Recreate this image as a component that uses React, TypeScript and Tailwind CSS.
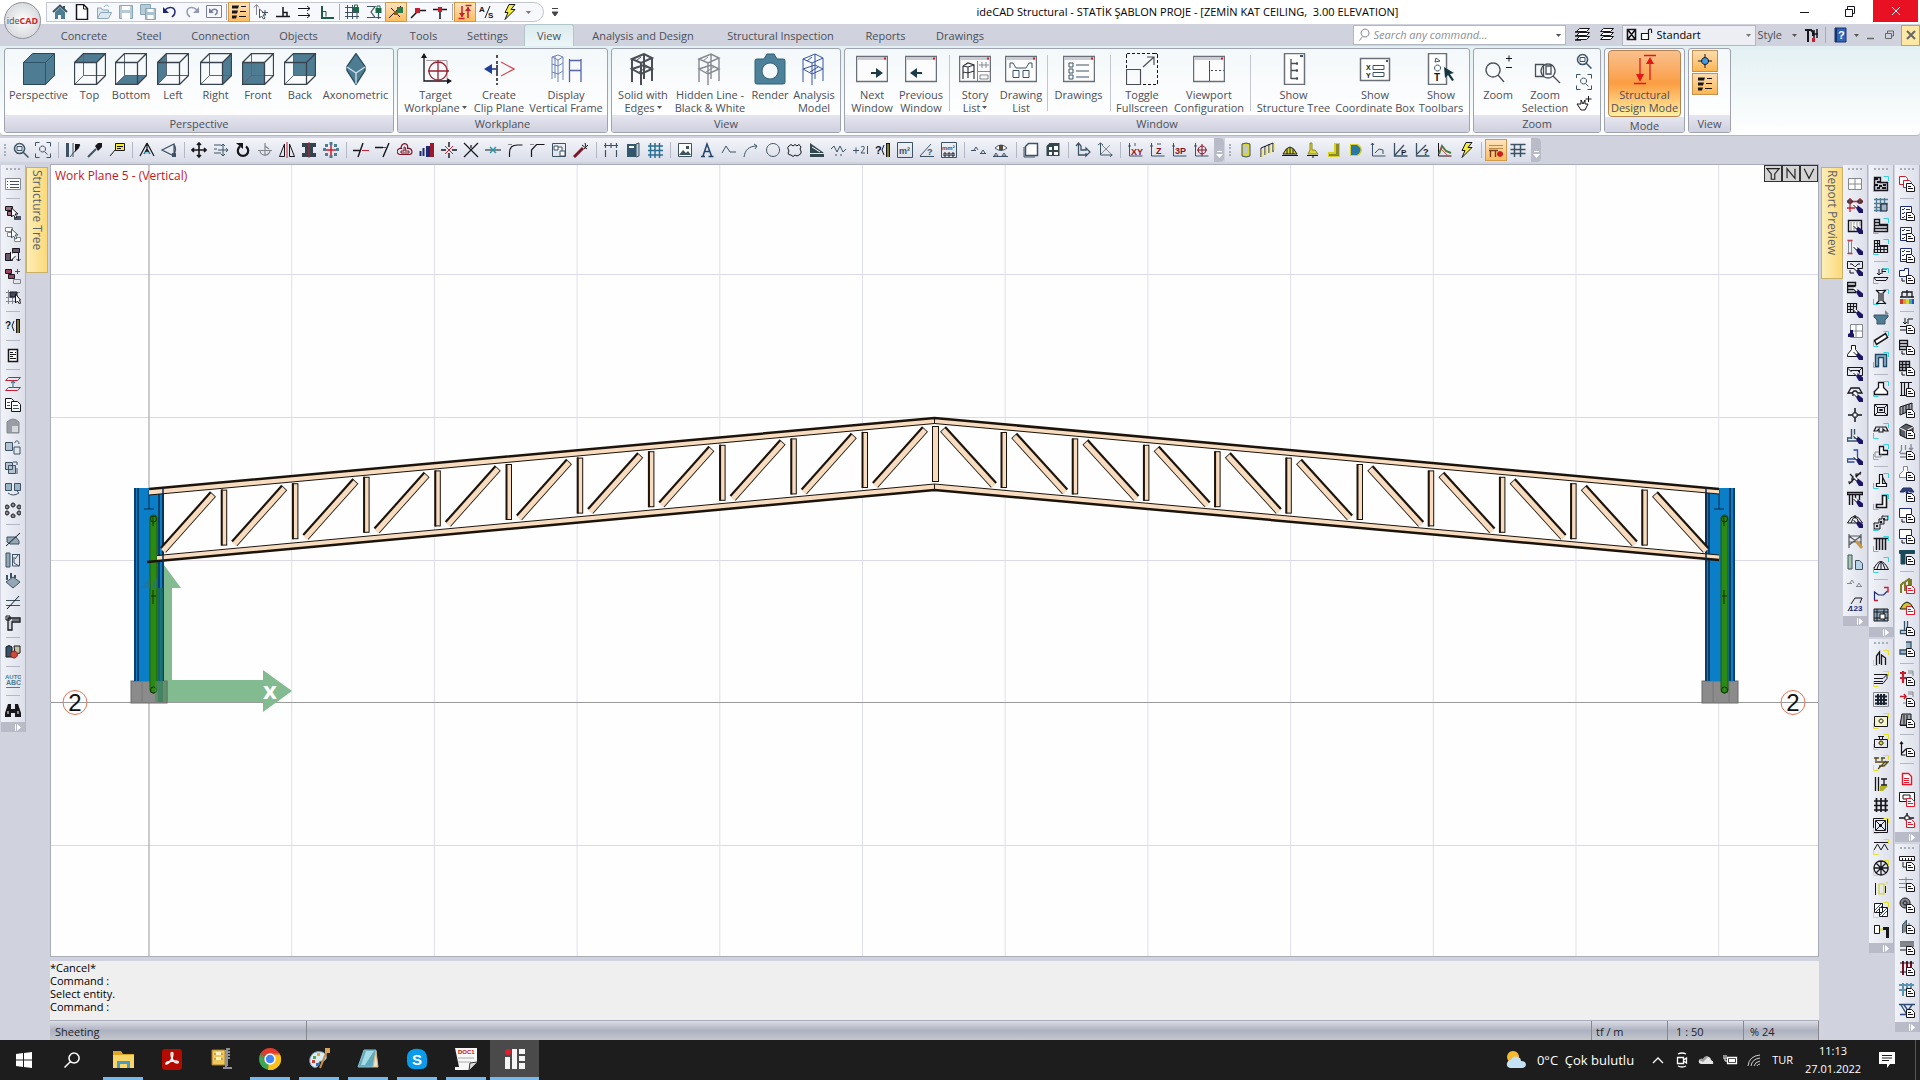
import { ReactNode } from "react";
import { clsx } from "clsx";

const K = "#16161c";
const N = "#1c2a78";
const S = "#3d5364";
const R = "#c81e2e";
const G = "#85888f";
const T = "#4d7c93";
const C = "#35d3de";
const Y = "#e4e02a";
const W = "#ffffff";

// [path, stroke, fill, stroke width] or a small piece of text
type Stroke = [string, string?, string?, number?];
type Word = { t: string; x: number; y: number; s: number; c: string };
type Art = (Stroke | Word)[];
type Tool = [string, Art, boolean?];
type Bar = (Tool | null)[];

function Glyph({ art, size = 16, className }: { art: Art; size?: number; className?: string }) {
    return (
        <svg viewBox={`0 0 ${size} ${size}`} width={size} height={size} fill="none" className={clsx("shrink-0", className)} aria-hidden="true">
            {art.map((p, i) =>
                Array.isArray(p) ? (
                    <path key={i} d={p[0]} stroke={p[1] || "none"} fill={p[2] || "none"} strokeWidth={p[3] ?? 1} />
                ) : (
                    <text key={i} x={p.x} y={p.y} fontSize={p.s} fill={p.c} fontWeight="700" fontFamily="Liberation Sans, sans-serif">
                        {p.t}
                    </text>
                )
            )}
        </svg>
    );
}

const doc: Art = [["M7.5 7.5h5l3 3v5h-8z", K, W], ["M9 10.5h3M9 12.5h5", K]];
const docRed: Art = [["M7.5 7.5h5l3 3v5h-8z", "#e0182a", W], ["M9 10.5h3M9 12.5h5", "#e0182a"]];
const brush: Art = [["M8 8.5l3 0 5 4v3.5h-4l-2-3z", "", "#1c1464"], ["M7 7l3 3", W, "", 2], ["M6.5 8l3 3", K]];
const cy: Art = [["M.5 10v5.5h5M10.5 .5h5v4.5", C]];
const ye: Art = [["M.5 10v5.5h5M10.5 .5h5v4.5", Y]];

const lens: Art = [["M6.5 1.5a5 5 0 1 0 .1 0M10.5 10.5l5 5", S, "", 1.5]];
const lensBox: Art = [...lens, ["M4 4.5h5v4h-5z", S]];
const lensFit: Art = [["M.5 4v-3.5h4M11.5.5h4v4M15.5 11.5v4h-4M4.5 15.5h-4v-4", S], ["M7.5 4a3 3 0 1 0 .1 0M9.5 9.5l3 3", S]];
const bolt: Art = [["M8 .5h6l-4 5h4l-10 10 3-7h-3z", K, "#f4ee3a"]];
const layers: Art = [["M5.5 1.5h10l-3 3h-10zM5.5 5.5h10l-3 3h-10zM5.5 9.5h10l-3 3h-10z", K, W]];
const legend: Art = [["M1 1.5h7l-1 3h-6zM1 6.5h6l-1 3h-5zM1 11.5h5l-1 3h-4z", "", K], ["M10 2.5h5M9 7.5h6M8 12.5h7", K]];
const designArrows: Art = [["M5 2v11M11 3v11M1.5 14.5h6M8.5 1.5h6", R, "", 1.5], ["M2 9h6l-3 4zM8 7h6l-3-4z", "", R]];
const table: Art = [["M.5 2.5h15M.5 7.5h15M.5 11.5h15M4.5 2v13M10.5 2v13", S, "", 1.5]];
const ground: Art = [["M0 8.5h5M3 8l2-3 2 3M9 11.5h6M10 11l2-3 2 3", S]];

const quickTools: Bar = [
    ["Home", [["M1 8l7-6.5 7 6.5", S, "", 2], ["M3 8l5-5 5 5v7h-4v-4h-3v4h-3z", "", T], ["M12 2v4", S, "", 2]]],
    ["New", [["M2.5 .5h7l4 4v11h-11z", K, W, 1.5], ["M9.5 1v4h4", K]]],
    ["Open", [["M1.5 14v-10h4l1 2h6v2M1.5 14.5l3-6h11l-3 6z", "#8ba7b9", "#dde8ee"], ["M8 3c2-3 4-2 5 0", "#8ba7b9"]]],
    ["Save", [["M1.5 1.5h13v13h-13z", "#86a5b6", "#b6cbd6"], ["M4 2h8v4h-8zM4 9h8v6h-8z", "", W]]],
    ["Save all", [["M.5 .5h10v10h-10z", "#86a5b6", "#b6cbd6"], ["M5.5 4.5h10v11h-10z", "#86a5b6", "#a9c2cf"], ["M7.5 5h6v3h-6zM7.5 11h6v4h-6z", "", W]]],
    ["Undo", [["M3 6c4-4 10-3 10 2 0 3-2 4-3 5", "#1b2372", "", 1.5], ["M1 3v6h6z", "", "#1b2372"]]],
    ["Redo", [["M13 6c-4-4-10-3-10 2 0 3 2 4 3 5", "#9297b3", "", 1.5], ["M15 3v6h-6z", "", "#9297b3"]]],
    ["Undo view", [["M.5 1.5h15v12h-15z", "#777e9d"], ["M5 7c3-3 7-2 6 2l-2 2", "#777e9d", "", 1.5], ["M3 4v5h5z", "", "#777e9d"]]],
    null,
    ["Legend", legend, true],
    ["Pick", [["M3.5 1v10M1 3.5l2.5-3 2.5 3", G], ["M6.5 5v9l2-2 2 3 1.5-1-2-3h3z", S, W], ["M9 8.5h6M12 6v5", S]]],
    ["Perpendicular", [["M1 12.5h14M8 3v9M8 8.5h4v4", K, "", 1.5]]],
    ["Parallel", [["M1 4.5h12M1 11.5h12M10 2l3 2.5-3 2.5M10 9l3 2.5-3 2.5", K]]],
    ["Ortho", [["M3 2v12h12", "#1d5a4b", "", 2], ["M3 7.5h4v5", "#1d5a4b"]]],
    null,
    ["Grid lock", [["M1 3.5h14M1 8.5h14M1 12.5h14M3.5 1v14M8.5 1v14M13 9v6", S], ["M9 3h6v5h-6z", "", "#1d6a4b"], ["M10.5 3v-2h3v2", "#1d6a4b"]]],
    ["Object lock", [["M1 2.5h8l-4 5.5 4 5.500h-8M12.500 9v6M10 13.5h5", S, "", 1.2], ["M9.500 4h6v5h-6z", "", "#1d6a4b"], ["M11 4v-2h3v2", "#1d6a4b"]]],
    ["Snap lock", [["M1 14l12-12M3 4l9 9", K], ["M9 3h6v6h-6z", "", "#2a7d4b"], ["M6 7h4v4h-4z", "", "#8a5d16"]], true],
    ["Snap near", [["M1 14l6-6M8 6.5h8", K, "", 1.5], ["M5 4h5v5h-5z", "", R]]],
    ["Snap end", [["M1 5.5h14M8 6v9", K, "", 1.5], ["M6 3h4v5h-4z", "", R]]],
    null,
    ["Structural design", designArrows, true],
    ["Analysis style", [{ t: "A", x: 0, y: 8, s: 8, c: K }, ["M11 2l-5 12", K], { t: "S", x: 9, y: 14, s: 8, c: K }]],
    ["Run analysis", bolt],
];

const drawTools: Bar = [
    ["Zoom window", lensBox],
    ["Zoom extents", lensFit],
    null,
    ["Match", [["M1 1h3v14h-3z", "", S], ["M8 1v14M5 15l10-12", S], ["M10 2h5l-1 4-4 4z", "", K]]],
    ["Pipette", [["M1 15l8-8", S, "", 2], ["M8 4l3-3h4v4l-4 4z", "", K]]],
    ["Label", [["M6.5 1.5h9v7h-9z", K, "#f5ee31"], ["M8 4.5h6M8 6.5h4M6 8l-5 6", K]]],
    null,
    ["Dimension", [["M8 1l-7 13M8 1l7 13M8 1v9M5 12l3-5 3 5", K, "", 1.2], ["M5 11h6", C]]],
    ["Angle", [["M1 8l12-6v12zM13 2q3 6 0 10", S, "", 1.2], ["M11 11h4v4h-4z", "", S]]],
    null,
    ["Move", [["M8 1v14M1 8h14M6 3l2-2 2 2M6 13l2 2 2-2M3 6l-2 2 2 2M13 6l2 2-2 2", K, "", 1.6]]],
    ["Stretch", [["M1 3h7M1 7h3M1 11h7M10 2v12M5 8h10M8 4l2-2 2 2M8 12l2 2 2-2M13 6l2 2-2 2", S]]],
    ["Rotate", [["M5 4.5a5.2 5.2 0 1 0 6 0", K, "", 2.2], ["M1 1h7v6z", "", K]]],
    ["Rotate copy", [["M8 1v13M1 8.5h14M3 9c1 5 8 6 10 0M8 4l4 3", G, "", 1.2]]],
    ["Mirror", [["M8 0v16", R], ["M5.5 2v12.5h-5zM10.5 2v12.5h5z", K]]],
    ["Mirror section", [["M1 1h14v4h-3v6h3v4h-14v-4h3v-6h-3z", "", "#32424e"], ["M8 0v16", R]]],
    ["Array", [["M2 2h3v3h-3zM11 2h3v3h-3zM2 11h3v3h-3zM11 11h3v3h-3zM6.5 0h3v3h-3zM6.5 13h3v3h-3zM0 6h3v3h-3zM13 6h3v3h-3z", "", T], ["M8 3v10M3 8h10", R, "", 1.5]]],
    null,
    ["Trim", [["M0 8.5h8M5 15l5-14", K, "", 1.4], ["M9 8.5h7", R, "", 1]]],
    ["Extend", [["M0 5.5h8M8 15l6-14", K, "", 1.4], ["M8 5.5h4", R]]],
    ["Offset", [["M5.5 2.5c3-2 6 0 5 4 5-1 6 6 2 6h-9c-5 0-4-7 1-6-1-2 0-3 1-4z", "#7c1626", "", 1.2], ["M7 5c2 0 2 1 1 4h4v2h-8v-2h3z", "#7c1626"]]],
    ["Elevation", [["M1.5 9v5M4.5 6v8", N, "", 2], ["M7 4h4v11h-4z", "", N], ["M11 1h4v14h-4z", "", "#9c1a28"]]],
    ["Break", [["M8 0v5M8 11v5M0 8h5M11 8h5", K, "", 1.4], ["M4 4l8 8M12 4l-8 8", R]]],
    ["Intersect", [["M1 1l14 14M15 1l-14 14M8 3v3", K, "", 1.2]]],
    ["Join", [["M0 8h16", K], ["M5 5l3 3-3 3M11 5l-3 3 3 3", "#2596a8", "", 1.4]]],
    ["Fillet", [["M2.5 15v-4c0-6 3-8 8-8h5", K, "", 1.2], ["M1 2.5h4", G]]],
    ["Chamfer", [["M2.5 15v-7l5-5.5h8", K, "", 1.2], ["M1 2.5h4", G]]],
    ["Region", [["M1.5 1.5h13v13h-13z", S], ["M3 4h4v4h-4zM9 9h5v5h-5zM7 5h4v4", S, W]]],
    ["Wizard", [["M1 15l9-9", "#7c1626", "", 3], ["M9 3l5 4M12 1l1 4M15 3l-4 4", K]]],
    null,
    ["Axis", [["M1 3.5h14M2.5 1v5M8 1v5M13.5 1v5M2.5 8v7M13.5 8v7", S, "", 1.2]]],
    ["Library", [["M2 2h9v13h-9z", "", "#33576c"], ["M11 2l3-1v13l-3 1z", S, "#b8ccd6"], ["M4 4h5v2h-5z", "", W]]],
    ["Grid", [["M1 4h15M1 8.5h15M1 13h15M3.5 1v15M8 1v15M12.5 1v15", "#2a6f93", "", 1.5]]],
    null,
    ["Image", [["M1.5 1.5h13v13h-13z", S, W], ["M2 13l4-5 3 3 2-2 3 4z", "", S], ["M9 4h3v3h-3z", "", S]]],
    ["Text", [["M2 14.5h4M9.5 14.5h5M4 14l4-12 4.5 12M6 9.5h5", "#24466a", "", 1.5]]],
    ["Polyline", [["M1 11l4-7 4 6h6", S]]],
    ["Curve", [["M1 15c1-7 5-11 13-11M11 2l3 2-2 3", S]]],
    ["Circle", [["M8 1.5a6.5 6.5 0 1 0 .1 0", S]]],
    ["Cloud", [["M2 4q2-3 4 0 2-3 4 0 2-3 4 1-2 2 0 4 1 3-2 4-2 2-4 0-2 3-4 0-3 0-3-2 2-2 0-4-1-2 1-3z", K]]],
    ["Hatch", [["M1 1v10h14zM1 12h14v3h-14z", "", "#33474f"], ["M3 5l8 5", W]]],
    ["Spline", [["M0 7l3-3 3 6 3-6 3 6 3-3M4 13h2M9 13h2", S]]],
    ["Level", [["M0 8.5h6M3 5.5v6M8 5q4-2 3 2l-3 4h4M14.5 4v8", S]]],
    ["Measure", [{ t: "?", x: 0, y: 12, s: 11, c: K }, ["M9 3l-2 5 2 5", K], ["M11 1h4v14h-4z", "", K], ["M13 2v13", "#f2e838", "", 1]]],
    ["Area", [["M.5 .5h15v15h-15z", S], { t: "m²", x: 2, y: 12, s: 9, c: S }]],
    ["Measure angle", [["M1 14.5h14M1 14l11-12", S], { t: "?", x: 8, y: 13, s: 9, c: S }]],
    ["Sections", [["M.5 .5h15v15h-15z", S], { t: "mm²", x: 1, y: 8, s: 6, c: S }, ["M3 11h2v3h-2zM7 11h2v3h-2zM11 11h2v3h-2z", K]]],
    null,
    ["Supports", ground],
    ["Visibility", [["M2 6q6-6 12 0-6 5-12 0z", S, W], ["M6 3h4v5h-4z", "", "#5c4634"], ["M1 14l2-3 2 3zM9 14l2-3 2 3zM0 14.5h15", S]]],
    null,
    ["Sheet", [["M2.5 4.5l3-3h9v12h-12z", S, W, 1.5], ["M1 5v10h11", S]]],
    ["Sheets", [["M1.5 4l3-3h10v13h-13z", "", "#33474f"], ["M4 5h3v3h-3zM9 4h4v4h-4zM4 10h3v3h-3zM9 10h4v3h-4z", "", W]]],
    null,
    ["Origin", [["M3.5 1v12h8M1 4l2.5-3 2.5 3v4h5v-2l4 4-4 4v-3", S, "", 1.3]]],
    ["Axes", [["M3.5 1v12h12M1 3l2.5-2 2.5 2M13 11l2 2-2 2", S], ["M5 3l9 9M13 3l-9 9", G]]],
    null,
    ["Plane XY", [["M2.5 1v13h13M1 4h3M8 1v3", S], { t: "XY", x: 4, y: 13, s: 9, c: "#8c1022" }]],
    ["Plane Z", [["M2.5 1v13h13M1 4h3M8 2h4", S], { t: "Z", x: 7, y: 12, s: 9, c: "#8c1022" }]],
    ["Plane 3P", [["M2.5 1v13h13M1 4h3", S], { t: "3P", x: 4, y: 12, s: 9, c: "#8c1022" }]],
    ["Plane object", [["M2.5 1v13h13M1 4h3", S], ["M9 4a4 4 0 1 0 .1 0M9 2v12M4 8h10", "#8c1022"]]],
];

const loadTools: Bar = [
    ["Column", [["M4 2q4-2 8 0v12q-4 2-8 0z", S, "#d9d532"], ["M6 4h4v8h-4z", "", "#c1c7c5"]]],
    ["Beam frame", [["M1 6v9M5 4v9M9 2v9M13 1v9M1 6l12-5", K], ["M2 7v8M6 5v8M10 3v8M14 2v6", Y]]],
    ["Dome load", [["M1 12q7-14 14 0z", K, "#d9d532"], ["M5 12v-5M8 12v-6M11 12v-5M0 13.5h16", K]]],
    ["Footing load", [["M6 1h2v7h3l3 4h-10l2-4z", "#8b8a28", "#d9d532"], ["M3 13.5h11M9 14v2", K]]],
    ["Wall load", [["M8 1h6v14h-12v-5h6z", "", "#d5d028"], ["M10 2h3v12h-10v-2h7z", "", "#8b8a28"]]],
    ["Solid", [["M2 2h8q8 6 0 12h-8z", "", "#d5d028"], ["M3 3h6q7 5 0 10h-6z", "", "#2878a3"]]],
    ["Diagram", [["M2.5 1v13h13M1 3l1.5-2 1.5 2M5 11l4-4 4 1 0 4", S]]],
    ["P diagram", [["M2.5 1v13h13M3 13l9-10", S, "", 1.3], { t: "P", x: 9, y: 13, s: 8, c: K }]],
    ["Query diagram", [["M2.5 1v13h13M3 12l9-9", S, "", 1.3], { t: "?", x: 9, y: 13, s: 9, c: K }]],
    ["Spectrum", [["M2.5 1v13h13", K], ["M3 12l3-8 4 5 5 2", "#4c7a3c", "", 2], ["M4 6l9 9", "#b25058"]]],
    ["Analyse", bolt],
    null,
    ["Steel frame", [["M1 3.5h14M1 6.5h14", "#b98a4a"], ["M1 8.5h9M2.5 9v6M7.5 9v6", "#7a3a1e", "", 1.4], ["M12 9a3 3 0 1 0 .1 0", "", "#d01c1c"]], true],
    ["Table", table],
];

const leftTools: Bar = [
    ["Properties", [["M.5 2.5h15v11h-15z", G, W], ["M2 5.5h1M2 8.5h1M2 11.5h1M5 5.5h9M5 8.5h9M5 11.5h9", S]]],
    null,
    ["Select", [["M.5 1.5h7v4h-7zM2.5 6.5h6v4h-6z", K, "#9a6c80"], ["M9 11h7v4h-7z", "", "#4b5365"], ["M6.5 3v9l2-2 2 3 1.5-1-2-3h3z", K, W]]],
    ["Deselect", [["M.5 1.5h7v4h-7zM2.5 6.5h6v4h-6zM9.5 11.5h6v4h-6z", G, W], ["M6.5 3v9l2-2 2 3 1.5-1-2-3h3z", S, W]]],
    ["Select level", [["M.5 6.5h7v7h-7zM7.5 1.5h7v4h-7z", K, "#6b5670"], ["M5.5 5v9l5-5M13.5 5v9M11.5 12l2 2 2-2", K, W]]],
    ["Select group", [["M.5 1.5h6v4h-6zM3.5 6.5h6v4h-6z", K, "#9a4460"], ["M8.5 11.5h7v4h-7z", G], ["M10 3.5h5M12.5 1v5", S]]],
    ["Select grid", [["M1 3.5h14M1 8.5h8M1 12.5h9M3.5 1v14M7.5 6v9", G], ["M5 3h7v5h-7z", K, "#444b5c"], ["M10.5 5v9l2-2 2 3 1-1-1-3h1z", K, W]]],
    null,
    ["Measure", [{ t: "?", x: 0, y: 11, s: 10, c: K }, ["M9 3l-2 5 2 5", K], ["M11 1h4v14h-4z", "", K], ["M13 2v13", "#e8cf38"]]],
    null,
    ["Notes", [["M3.5 2.5h9v12h-9z", K, W, 1.5], ["M5 5.5h3M5 7.5h6M5 9.5h3M5 11.5h6M10 5.5h1", K]]],
    null,
    ["Planes", [["M3.5 1.5h12l-3 3h-12zM3.5 11.5h12l-3 3h-12z", R], ["M8 5v7M6 7l2-2 2 2", T, "", 1.2]]],
    ["Copy", [["M.5 1.5h6l2 2v8h-8z", K, W], ["M6.5 4.5h6l3 3v7h-9z", K, W], ["M2 5.5h3M2 8.5h3M8 8.5h5M8 11.5h6", S]]],
    ["Paste", [["M2 4q6-6 12 0v11h-12z", G, "#9a9da5"], ["M7 8h6v6h-6z", "", "#d6d8de"]]],
    ["Move to", [["M.5 3.5h7v8h-7z", S, "#b5c2d2"], ["M10 4c0-3 4-3 4 1M9 8h6v7h-6z", S]]],
    ["Copy to", [["M.5 2.5h7v7h-7zM3.5 5.5h7v8h-7z", S, "#b5c2d2"], ["M8 2h4v3M12 8v6", S]]],
    ["Mirror to", [["M.5 2.5h6v7h-6zM9.5 2.5h6v7h-6z", S, "#9cb4c8"], ["M3 12q5 4 11 0M12 10l2 2", S]]],
    ["Polar", [["M8 1a2 2 0 1 0 .1 0M8 12a2 2 0 1 0 .1 0M2 3a2 2 0 1 0 .1 0M2 9a2 2 0 1 0 .1 0M14 3a2 2 0 1 0 .1 0M14 9a2 2 0 1 0 .1 0", K, G]]],
    null,
    ["Cut plane", [["M2 6h9l3 4v3h-9l-3-2z", S, "#93a7b4"], ["M1 15l14-13", K]]],
    ["Cut column", [["M1 1h4v14h-4z", S, "#93a7b4"], ["M7.5 2v12h7v-12M7 2.5h8M9 5v6l5 3M13 3l-3 4", S]]],
    ["Slab edit", [["M1 9l7-5 7 5-7 6z", S, "#93a7b4"], ["M2 7v-5M6 5v-5M10 5v-3", S, "", 2]]],
    ["Cut line", [["M1 6.5h14M1 11.5h14", S], ["M2 15l12-13", K]]],
    ["Pipe", [["M3 3h12v4h-8v8h-4z", K, "#cfd4dd", 1.3], ["M1 1h4v4h-4zM7 5h8", K]]],
    null,
    ["Materials", [["M1 3q3-3 6 0v10h-6z", K, "#35536b"], ["M9 2h6v7l-5 1z", K, "#c9c2a2"], ["M9 7a3.5 3.5 0 1 0 .1 0", "#762018", "#cc4a3c"]]],
    null,
    ["Auto text", [{ t: "AUTO", x: 0, y: 6, s: 6, c: T }, { t: "ABC", x: 1, y: 12, s: 7, c: T }, ["M1 14.5h14", T]]],
    null,
    ["Find", [["M3 2h3v5h4v-5h3l3 9v4h-6v-4h-4v4h-6v-4z", "", K], ["M3 9v3M13 9v3", W]]],
];

const editTools: Bar = [
    ["Edit grid", [["M1.5 2.5h13v11h-13zM1 8h14M8 2v12", G, W]]],
    ["Edit axis", [["M3 1v14M13 1v6M0 4.5h16M0 11h8", R, "", 1.3], ["M1 3h4v3h-4zM11 3h4v3h-4z", K], ...brush]],
    ["Edit wall", [["M1.5 2.5h13v11h-13z", K, W, 1.4], ["M4 4v9M7 4v9M10 4v4M13 4v4", G], ...brush]],
    ["Edit column", [["M.5 1.5h5M.5 14.5h5", R, "", 1.5], ["M1.5 2h3v12h-3z", G], ...brush]],
    ["Edit opening", [["M.5 1.5h15v7h-15z", K], ["M3 4h2l3 3 3-3h2M3 10v3h4", K], ...brush]],
    ["Edit slab", [["M.5 1.5h8v3h-8zM.5 5.5h8M.5 8.5h8v3h-8zM.5 1v11", K, "", 1.4], ...brush]],
    ["Edit ribbed slab", [["M.5 1.5h9v9h-9zM.5 4.5h9M.5 7.5h9M3.5 1v10M6.5 1v10", K, "", 1.2], ...brush]],
    ["Edit raft", [["M3.5 1.5h12v13h-12zM3 8h12M9 1v14", G, W], ["M1 14v-3l2-1v-3h3v3l1 1v3z", "", "#1c1464"]]],
    ["Edit footing", [["M4.5 1.5h4v4l4 5v2h-12v-2l4-5z", K, W], ...brush]],
    ["Edit mat", [["M.5 2.5h15v8h-15zM3.5 5.5h9v3M.5 3l4 4M15 3l-4 4", K], ...brush]],
    ["Edit beam", [["M1 7l3-5h8l3 5h-4l-2-2h-2l-2 2zM6 7v3", K, "", 1.3], ...brush]],
    ["Edit node", [["M8 1v14M1 8h14", K, "", 1.5], ["M6 6h4v4h-4z", K, W]]],
    ["Edit stair wall", [["M4.5 1v10M7.5 1v9h3v3h-10v-3h4", "#35536b", "", 1.4], ...brush]],
    ["Edit corner", [["M6.5 1h4v9h-10v3h7", "#2b4ea0", "", 1.3], ...brush]],
    ["Edit stair", [["M1 12h4v-4h4v-4h5M2 14l12-12M3 4l6 6", K, "", 1.2], ...brush]],
    ["Edit louver", [["M.5 1.5h15v2h-15zM2.5 4v10M5.5 4v10M8.5 4v5M12.5 4v5", K, "", 1.4], ...brush]],
    ["Edit dome", [["M.5 11q7-14 15 0zM4 11q4-12 8 0M8 3v7", K], ...brush]],
    ["Edit truss", [["M2 1v14M14 1v14M2 3l12 9M2 12l12-9M2 3h12M2 9h12", "#55595f", "", 1.2], ["M9 8l6 7", "#c79a4b", "", 3]]],
    ["Edit panel", [["M1 1h4v14h-4z", S, "#a9c8a9"], ["M8.5 6.5h4l3 3v6h-7z", S, "#b9d4e8"]]],
    ["Edit support", [["M0 8.5h5M3 8l2-3 2 3M9 11.5h6M10 11l2-3 2 3", G]]],
    ["Edit numbers", [["M4 8l4-6h7l-2 5M1 15l3-5", K], { t: "123", x: 2, y: 15, s: 8, c: N }]],
];

const modelTools: Bar = [
    ["Slab", [["M1.5 1.5h6v5h7v8h-13z", K, "#c4c8ce", 1.4], ["M2 3h3M4 6h3M2 9h3M6 10h3M10 9h3M4 12h3M9 12h4", K, "", 2], ...cy]],
    ["Ribbed slab", [["M1 2.5h14M1 6.5h14M1 10.5h6M1 13.5h6M3.5 1v14M7.5 1v14M11.5 1v6", T, "", 1.4], ["M8 7h6v7h-6z", K, "#9cb4c8"]]],
    ["Hollow slab", [["M1.5 1.5h5v5h8v7h-13zM1.5 4.5h5M1.5 7.5h13M1.5 10.5h13", K, "", 1.4], ...cy]],
    ["Waffle slab", [["M1.5 1.5h5v5h8v7h-13zM1.5 4.5h5M1.5 7.5h13M1.5 10.5h13M4.5 2v11M7.5 7v6M11 7v6", K, "", 1.2], ...cy]],
    null,
    ["Point load", [["M6 1v6M4 5l2 2 2-2M9 1h5M9 1v5M9 3.5h4M1 9.5h14l-2 3h-10z", K], ...cy]],
    ["Column", [["M3 1.5h10M3 14.5h10M3 1l3 3v8l-3 3M13 1l-3 3v8l3 3M8 4v8", K, "", 1.2], ...cy]],
    ["Capital", [["M1 5h14v2l-3 3v4h-8v-4l-3-3z", S, T], ["M12 0l4 4h-4z", "", G]]],
    ["Beam", [["M1.5 9.5l11-7 2 4-11 7z", K, W, 1.5], ...cy]],
    ["Portal", [["M2.5 14.5v-12h11v12h-3v-9h-5v9z", "#1c4a66", "#9cb4c8", 1.4], ...cy]],
    null,
    ["Footing", [["M5.5 1.5h5v5l4 4v3h-13v-3l4-4z", K, W, 1.3], ...cy]],
    ["Pit", [["M1.5 2.5h13v11h-13zM4.5 5.5h7v5h-7zM6.5 7.5h3v1h-3zM2 3l3 3M14 3l-3 3M2 13l3-3M14 13l-3-3", K]]],
    ["Strip footing", [["M1 8l2-4h10l2 4h-3l-2-2v3h-4v-3l-2 2z", K, "", 1.2], ...cy]],
    ["Step footing", [["M6.5 2.5h4v4h4v4h-8z", K, W, 1.3], ["M2 13v-5h4M2 13h6v-3", G], ...cy]],
    null,
    ["Wall", [["M6.5 1.5h3v9h4v3h-10v-3h3zM9.5 4l3 6", K, W, 1.2], ...cy]],
    ["Corner wall", [["M9.5 1.5h4v12h-10v-3h6z", K, W, 1.6], ...cy]],
    ["Ramp", [["M9 1h6v4h-4v4h-4v5h-6v-6h5v-4h3z", K, "#d5d8dd"], ["M3 10h2v2h-2zM10 3h2v2h-2zM7 6h2v2h-2z", "", K], ...cy]],
    ["Piles", [["M.5 2.5h15M3.5 3v11M6.5 3v11M9.5 3v11M12.5 3v11", K, "", 1.5], ...cy]],
    ["Dome", [["M.5 12.5q7-16 15 0zM4 12q4-14 8 0M8 4v8", K], ...cy]],
    null,
    ["Path", [["M1.5 14v-8l4 3h5l4-4", N, "", 1.2], ["M1 14.5h4M11 1.5h4v5", R, "", 1.4]]],
    ["Mesh view", [["M1 2h14v12h-14z", K, "#8ea8ba"], ["M1 5h14M1 11h14M4 2v12M11 2v12", K], ["M7 7h5v5h-5z", K, W]]],
];

const steelTools: Bar = [
    ["Purlin", [["M3.5 15v-9l3-4v12M8.5 15v-10l4 3v7", K, "", 1.3], ...ye]],
    ["Plate", [["M1 3.5h13v4l-4 5h-10M1 7.5h9l4-4M1 10.5h9", K], ...ye]],
    ["Rebar grid", [["M.5 .5h15v14h-15z", G], ["M2 4.5h12M2 8h12M2 11.5h12M5 2v11M8 2v11M11 2v11", "#1a2230", "", 2]]],
    ["Bolt", [["M1.5 3.5h13v10h-13z", K, "#f5f4c8"], ["M8 6a2 2 0 1 0 .1 0", K], ...ye]],
    ["Anchor", [["M1.5 5.5h13v8h-13zM6.5 2v4M9.5 2v4M5 2.5h6", K], ["M8 7a2 2 0 1 0 .1 0", K, Y], ...ye]],
    ["Weld", [["M1 3h5M8 3h4M2 7h13l-4 4h-5M3 3v3M9 3v3M5 14l8-8", "#53470f", "", 1.3], ...ye]],
    ["Profile", [["M2.5 1v14M5.5 1v14M8 3h6M8 9h6M11 3v6", K, "", 1.3], ["M7 10h8l-5 5h-3z", "", "#b0b226"]]],
    ["Trusses", [["M1 4h14M1 8.5h14M1 13h14M3.5 1v14M8 1v14M12.5 1v14", K, "", 1.7]]],
    ["Bracing", [["M.5 .5h14v14h-14zM2.5 2.5h10v10h-10zM3 3l9 9M12 3l-9 9", K], ["M6 6h3v3h-3z", "", K], ...ye]],
    ["Wave", [["M1 11l3.5-6 3.5 6 3.5-6 3.5 6M1 3.5h14", K], ...ye]],
    ["Sphere", [["M8 1a7 7 0 1 0 .1 0M8 1v14M1 8h14M3 3l10 10M13 3l-10 10", K, "", 1.3], ...ye]],
    ["Split", [["M2.5 2v12M12.5 5v7", K], ["M6 3h5v10h-5zM13 2h2", "#d2cf2d", "", 1.2]]],
    ["Copy hatch", [["M1.5 1.5h8v9h-8zM6.5 5.5h8v9h-8z", K, W], ["M2 8l6-6M7 13l7-7M3 10l6-6M9 14l5-5", S], ...ye]],
    ["Bracket", [["M1.5 2.5h5v8h-5z", K, W], ["M7 6.5h4", Y, "", 2], ["M10 4h6v11h-3v-8h-3z", "", K]]],
];

const reportTools: Bar = [
    ["Copy report", [["M.5 .5h6l2 2v6h-8z", R, W], ["M4.5 4.5h6l2 2v5h-8z", R, W], ...doc]],
    null,
    ["Check list", [["M1.5 1.5h11v13h-11z", N, W], ["M3 4l1 1 2-2M7 4.5h4M3 8l1 1 2-2M3 12l1 1 2-2", N], ...doc]],
    ["Check list 2", [["M1.5 1.5h11v13h-11z", N, W], ["M3 4l1 1 2-2M7 4.5h4M3 8.5h4M3 12l1 1 2-2", N], ...doc]],
    ["Check list 3", [["M1.5 1.5h11v13h-11z", N, W], ["M3 4l1 1 2-2M7 4.5h4M3 8l1 1 2-2M3 12.5h4", N], ...doc]],
    ["Export report", [["M.5 2.5h5v-2h4v8h-9z", N, W], ["M3 10v3h3", K], ...doc]],
    ["Stress report", [["M8 1v6M3 3h10v5M1 8h14M3 3v5", K, "", 1.3], ["M1 10h3v5h-3z", "", "#c8402a"], ["M4 10h3v5h-3z", "", "#e89a28"], ["M7 10h3v5h-3z", "", "#d8d83a"], ["M10 10h3v5h-3z", "", "#3ab08a"], ["M13 10h2v5h-2z", "", "#2a4ad0"]]],
    null,
    ["Load report", [["M6 0v6M4 4l2 2 2-2M9 1h5M9 1v5M1 8.5h8M1 12h6", K], ...doc]],
    ["Slab report", [["M.5 1.5h8v9h-8zM.5 4.5h8M.5 7.5h8", K, "", 1.3], ["M3 12v3h3", K], ...doc]],
    ["Ribbed report", [["M.5 1.5h10v9h-10zM.5 4.5h10M.5 7.5h10M3.5 1v10M7 1v10", K, "", 1.4], ["M3 12v3h3", K], ...doc]],
    ["Column report", [["M1 1.5h12M1 14.5h6M2.5 2v12M5.5 2v12M9.5 2v5", K, "", 1.2], ...doc]],
    ["Wall report", [["M1 5l12-4v7l-12 5z", K, "#a3a6ab"], ["M4 4v8M7 3v8M10 2v5", K], ...doc]],
    ["Solid report", [["M1 5l6-4 7 3v8l-7 3-6-3z", K, "#5a5e66"], ["M1 5l6 3 7-4M7 8v6", W], ...doc]],
    ["Footing load report", [["M2.5 1v5l-2 3M6.5 1v5M12 0v6M10 4l2 2 2-2M1 9.5h8M1 13h6", G, "", 1.3], ...doc]],
    ["Footing report", [["M4.5 1.5h4v4l4 4v3h-12v-3l4-4z", G, W], ...doc]],
    ["Beam report", [["M1 6l3-4h8l3 4h-4l-2-2v3h-2v-3l-2 2z", N, "#3a4460"], ...doc]],
    ["Frame report", [["M.5 1.5h12v9h-12z", N, W], ["M3 12v3h3", K], ...doc]],
    ["Panel report", [["M.5 1.5h12v9h-12z", N, W], ["M3 12v3h3", K], ...doc]],
    ["Pile report", [["M.5 1.5h15v3h-15zM2 4h4v11h-4z", "#1d4a58", "#1d4a58"], ...doc]],
    null,
    ["Rebar report", [["M2 15v-8l3-3M6 13v-9l4-3v9M12 1v6", "#7c7a22", "", 2], ...docRed]],
    ["Dome report", [["M1 10q7-14 14 0z", K, "#c9c62e"], ...docRed]],
    ["Stair report", [["M5.5 1v9M8.5 1v6M1.5 10.5h7v3h-7z", "#35536b", "", 1.3], ...doc]],
    ["Corner report", [["M7 1h5v8h-11v4h6", "#35536b", "#9cb4c8", 1.3], ...doc]],
    null,
    ["Axis report", [["M1 3h6M1 8h6M4 1v12", R, "", 2.2], ["M9 1h5v5M9 3h5", G], ...doc]],
    ["Offset report", [["M1 5.5h6M5 3l2 2.5-2 2.5", R, "", 1.5], ["M9 1h5v5M4 12h3M9 3h5", G], ...doc]],
    ["Louver report", [["M3 2h9v11h-11z", K, "#a3a6ab"], ["M5 3v9M8 3v9M1 13.5h8", K], ...doc]],
    null,
    ["Diagram report", [["M2.5 1v13h4M1 3l1.5-2 1.5 2M3 12l4-4", K, "", 1.2], ...doc]],
    null,
    ["Report", [["M3.5 3.5h6l3 3v8h-9z", "#e0182a", W, 1.4], ["M5 8.5h5M5 10.5h5M5 12.5h5", "#e0182a"]]],
    ["Section report", [["M.5 1.5h15v9h-15zM4 4h7v4h-7z", K, W], ...docRed]],
    ["Node report", [["M8 1v12M0 6h15", K, "", 1.5], ["M6 4h4v4h-4z", K, W], ...docRed]],
];

const quantityTools: Bar = [
    ["Quantity ruler", [["M.5 1.5h15v4h-15zM3.5 3v2M6.5 3v2M9.5 3v2M12.5 3v2M4 7v5h3", K, W], ...doc]],
    ["Quantity lines", [["M0 3.5h14M0 7.5h7M0 11.5h7M7 1v12", G], ...doc]],
    ["Quantity pipe", [["M6 1a5 5 0 1 0 .1 0M6 4a2 2 0 1 0 .1 0", K, "#85888f"], ...doc]],
    ["Quantity purlin", [["M3.5 15v-8l4-5v12M10 5v3", S, "#85888f"], ...doc]],
    ["Quantity plate", [["M1 3h14M1 7h14M1 11h6", K, "#85888f"], ["M1 4h14v2h-14z", "", "#85888f"], ...doc]],
    ["Quantity bars", [["M4 1v14M8 1v14M12 1v7", "#7a1020", "", 2], ["M1 3h14M1 12h6", K], ...doc]],
    ["Quantity mesh", [["M0 4h15M0 9h8M4 2v13M8 2v6M12 2v5", "#5b94b5", "", 2], ...doc]],
    ["Quantity truss", [["M0 2.5h16M2 3l5 8 6-8M5 3l3 4M1 12.5h6", "#2b4a78", "", 1.3], ...doc]],
];

function IconButton({ tool, className }: { tool: Tool; className: string }) {
    return (
        <button
            aria-label={tool[0]}
            className={clsx(
                "flex shrink-0 items-center justify-center",
                className,
                tool[2] && "border border-[#d09a4a] bg-linear-to-b from-[#fde3bd] to-[#fdbc5e]"
            )}
        >
            <Glyph art={tool[1]} />
        </button>
    );
}

function Caret({ color = "#555", className }: { color?: string; className?: string }) {
    return (
        <svg viewBox="0 0 5 3" width="5" height="3" className={clsx("shrink-0", className)} aria-hidden="true">
            <path d="M0 0h5l-2.5 3z" fill={color} />
        </svg>
    );
}

function HToolbar({ bar }: { bar: Bar }) {
    return (
        <div className="flex h-6 items-center rounded-r-sm bg-linear-to-b from-[#f4f5fa] to-[#d9dde8]">
            <div className="mr-1 ml-1 h-3 border-l-2 border-dotted border-[#a9aebb]" />
            {bar.map((tool, i) =>
                tool ? (
                    <IconButton key={i} tool={tool} className="h-[22px] w-[22px]" />
                ) : (
                    <div key={i} className="flex w-2 shrink-0 justify-center">
                        <div className="h-4 w-px bg-[#b4b8c4]" />
                    </div>
                )
            )}
            <div className="ml-0.5 flex h-6 w-2.5 items-end justify-center rounded-r bg-[#b9bcc8] pb-1">
                <svg viewBox="0 0 7 8" width="7" height="8" aria-hidden="true">
                    <path d="M1 1.5h5" stroke="#fff" />
                    <path d="M0 4h7l-3.5 4z" fill="#fff" />
                </svg>
            </div>
        </div>
    );
}

function VToolbar({ bar }: { bar: Bar }) {
    return (
        <div className="flex w-6 flex-col items-center bg-linear-to-r from-[#f1f3f9] to-[#dde0ea] shadow-[1px_0_0_#b3b7c4]">
            <div className="my-[3px] h-0.5 w-3.5 shrink-0 border-t-2 border-dotted border-[#a9aebb]" />
            {bar.map((tool, i) =>
                tool ? (
                    <IconButton key={i} tool={tool} className="h-[21px] w-[22px]" />
                ) : (
                    <div key={i} className="flex h-2 shrink-0 items-center">
                        <div className="h-px w-3.5 bg-[#b4b8c4]" />
                    </div>
                )
            )}
            <div className="mt-0.5 flex h-2.5 w-full shrink-0 items-center justify-end bg-[#b9bcc8] pr-1">
                <svg viewBox="0 0 6 7" width="6" height="7" aria-hidden="true">
                    <path d="M.5 0v7" stroke="#fff" />
                    <path d="M2 0v7l4-3.5z" fill="#fff" />
                </svg>
            </div>
        </div>
    );
}

/* ribbon artwork, 32px grid */

const faces: Record<string, string> = {
    Top: "M.5 9.5l9-9h22l-9 9z",
    Bottom: "M.5 31.5l9-9h22l-9 9z",
    Left: "M.5 9.5l9-9v22l-9 9z",
    Right: "M22.5 9.5l9-9v22l-9 9z",
    Front: "M.5 9.5h22v22h-22z",
    Back: "M9.5 .5h22v22h-22z",
};

const cube = (name: string): Art => [
    [faces[name], "", T],
    ["M9.5 .5v22l-9 9M9.5 22.5h22", "#5c6570"],
    ["M.5 9.5h22v22h-22zM.5 9.5l9-9h22l-9 9M31.5 .5v22l-9 9", "#39434d", "", 1.3],
];
const solidCube: Art = [["M.5 9.5l9-9h22v22l-9 9h-22z", "#26485a", T], ["M.5 9.5h22v22M22.5 9.5l9-9", "#2f5368"]];
const diamond: Art = [["M16 .5l9 13v4l-9 14-9-14v-4z", "#26485a", T, 1.3], ["M7 14l9 6 9-6M16 20v11", "#cfe0e8", "", 1.3]];

const tower = (c: string, w: number): Art => [
    ["M5 6l12-5 8 4-11 5zM5 16l12-4 8 4-11 5zM5 6v23M14 10v22M25 5v23M17 1v25", c, "", w],
    ["M9 8l5-4M12 19l8-5", c],
];
const win = (...inner: Art): Art => [["M.5 3.5h31v25h-31z", "#6b7078", "#fcfcfd", 1.5], ["M1 5.5h30", "#c9ccd2", "", 3], ["M28 4.5h2v2h-2z", "", R], ...inner];

interface RibbonItem {
    lines: string[];
    w: string;
    art: Art;
    menu?: boolean;
    gap?: boolean;
}

const groups: { name: string; items: RibbonItem[] }[] = [
    {
        name: "Perspective",
        items: [
            { lines: ["Perspective"], w: "w-[61px]", art: solidCube },
            { lines: ["Top"], w: "w-[41px]", art: cube("Top") },
            { lines: ["Bottom"], w: "w-[42px]", art: cube("Bottom") },
            { lines: ["Left"], w: "w-[42px]", art: cube("Left") },
            { lines: ["Right"], w: "w-[43px]", art: cube("Right") },
            { lines: ["Front"], w: "w-[42px]", art: cube("Front") },
            { lines: ["Back"], w: "w-[42px]", art: cube("Back") },
            { lines: ["Axonometric"], w: "w-[69px]", art: diamond },
        ],
    },
    {
        name: "Workplane",
        items: [
            {
                lines: ["Target", "Workplane"],
                w: "w-[69px]",
                menu: true,
                art: [["M4 2v26h26", K, "", 1.3], ["M1 5l3-5 3 5zM27 25l5 3-5 3z", "", K], ["M6 7.5h21v19", "#a89aa0"], ["M18 9a9 9 0 1 0 .1 0M18 7v21M8 18h21", "#9b2330", "", 1.3]],
            },
            { lines: ["Create", "Clip Plane"], w: "w-[58px]", art: [["M14 2v3M14 8v3M14 12v11M14 25v3M14 30v2", K, "", 1.5], ["M3 16h10", N, "", 1.5], ["M9 11v10l-8-5z", "", "#1f3f9a"], ["M18 9l13 7-13 7", "#d44a50", "", 1.2]] },
            { lines: ["Display", "Vertical Frame"], w: "w-[76px]", art: [["M2 4l6-2 5 2-5 3zM2 4v22M8 7v22M13 4v23M2 11l6 2 5-3M2 19l6 2 5-3M5 3v22", "#6f82ba"], ["M19.5 6v23M31 6v23M19 7.5h12M19 17.5h12", "#5664ac", "", 1.3]] },
        ],
    },
    {
        name: "View",
        items: [
            { lines: ["Solid with", "Edges"], w: "w-[56px]", menu: true, art: tower("#4b4e54", 2) },
            { lines: ["Hidden Line -", "Black & White"], w: "w-[78px]", art: tower("#85888e", 1.4) },
            { lines: ["Render"], w: "w-[42px]", art: [["M10 6l3-5h7l3 5h6q2 0 2 2v21q0 2-2 2h-26q-2 0-2-2v-21q0-2 2-2z", "#2f5f78", "#4c8199"], ["M16 10a8 8 0 1 0 .1 0", "#2f5f78", "#f4f8fa"]] },
            { lines: ["Analysis", "Model"], w: "w-[46px]", art: tower("#3854a0", 1) },
        ],
    },
    {
        name: "Window",
        items: [
            { lines: ["Next", "Window"], w: "w-[48px]", art: win(["M15 20h8", "#1d3c48", "", 2], ["M20 15v10l7-5z", "", "#1d3c48"]) },
            { lines: ["Previous", "Window"], w: "w-[50px]", art: win(["M9 20h8", "#1d3c48", "", 2], ["M12 15v10l-7-5z", "", "#1d3c48"]) },
            { lines: ["Story", "List"], w: "w-[46px]", menu: true, gap: true, art: win(["M18.5 8v20M18 18.5h13", G], ["M4 13l5-3 6 2v14M4 13v13M9 14v11M4 13l5 1 6-2M4 19l5 1 6-2", "#33363c", "", 1.2], ["M20 12h10M23 9v6M27 9v6M21 22h8v4h-8z", G]) },
            { lines: ["Drawing", "List"], w: "w-[46px]", art: win(["M5 15v-5h3l3 5h10l3-5h3v5M8 17.5h6v7h-6zM18 17.5h6v7h-6z", S]) },
            { lines: ["Drawings"], w: "w-[57px]", gap: true, art: win(["M6 10h4v4h-4zM6 16h4v4h-4zM6 22h4v4h-4zM13 12h13M13 18h13M13 24h13", S]) },
            { lines: ["Toggle", "Fullscreen"], w: "w-[58px]", gap: true, art: [["M1 .5h3M6 .5h3M11 .5h3M16 .5h3M21 .5h3M26 .5h5M31.5 1v4M31.5 7v3M31.5 12v3M31.5 17v3M31.5 22v3M31.5 27v4M30 31.5h-3M25 31.5h-3M20 31.5h-3M.5 1v4M.5 7v3M.5 12v3", K], ["M.5 16.5h14v15h-14zM17 14l11-10M21 4h7v8", "#4a4f57", "", 1.2]] },
            { lines: ["Viewport", "Configuration"], w: "w-[76px]", art: win(["M16.5 8v20M18 17.5h2M22 17.5h2M26 17.5h2M30 17.5h1", "#4a4f57"]) },
            { lines: ["Show", "Structure Tree"], w: "w-[81px]", gap: true, art: [["M6.5 .5h20v31h-20z", "#6b7078", W, 1.5], ["M22 2h3v2h-3z", "", S], ["M13 6v20M13 10.5h7M13 17.5h7M13 25.5h7M19 9v3M19 16v3M19 24v3", "#4a4f57", "", 1.3]] },
            { lines: ["Show", "Coordinate Box"], w: "w-[82px]", art: [["M1.5 5.5h29v22h-29z", "#6b7078", W, 1.5], ["M27 7h2v2h-2z", "", S], { t: "X", x: 7, y: 17, s: 7, c: K }, { t: "Y", x: 7, y: 25, s: 7, c: K }, ["M14 12.5h11v4h-11zM14 19.5h11v4h-11z", S]] },
            { lines: ["Show", "Toolbars"], w: "w-[50px]", art: [["M3.5 .5h18v31h-18z", "#6b7078", W, 1.5], ["M10 9l5-1-4-3z", S], ["M12.5 12a3 3 0 1 0 .1 0", S], { t: "T", x: 9, y: 28, s: 10, c: K }, ["M19 14l10 6-4 1 4 6-2 1-4-6-3 3z", "", "#173643"]] },
        ],
    },
];

function Label({ lines, menu }: { lines: string[]; menu?: boolean }) {
    return (
        <span className="mt-[3px] flex flex-col items-center text-[11px] leading-[13px] whitespace-nowrap">
            {lines.map((line, i) => (
                <span key={line} className="flex items-center gap-0.5">
                    {line}
                    {menu && i === lines.length - 1 && <Caret />}
                </span>
            ))}
        </span>
    );
}

function RibbonButton({ item }: { item: RibbonItem }) {
    return (
        <>
            {item.gap && (
                <div className="flex w-1.5 shrink-0 justify-center pt-1.5">
                    <div className="h-[56px] w-px bg-[#c3c6cf]" />
                </div>
            )}
            <button className={clsx("flex shrink-0 flex-col items-center pt-1", item.w)}>
                <Glyph art={item.art} size={32} />
                <Label lines={item.lines} menu={item.menu} />
            </button>
        </>
    );
}

function RibbonGroup({ name, children }: { name: string; children: ReactNode }) {
    return (
        <section className="flex flex-col overflow-hidden rounded-[3px] border border-[#9fa3ae] bg-linear-to-b from-[#f3f8fa] via-[#fbfcfd] to-white">
            <div className="flex h-[69px] px-[3px]">{children}</div>
            <h2 className="flex-1 bg-linear-to-b from-[#e6e6f0] to-[#cfd0de] text-center text-[11px] leading-[17px]">{name}</h2>
        </section>
    );
}

const tabs = [
    ["Concrete", "w-[76px]"],
    ["Steel", "w-[54px]"],
    ["Connection", "w-[89px]"],
    ["Objects", "w-[67px]"],
    ["Modify", "w-[64px]"],
    ["Tools", "w-[55px]"],
    ["Settings", "w-[73px]"],
    ["View", "w-[50px]"],
    ["Analysis and Design", "w-[138px]"],
    ["Structural Inspection", "w-[137px]"],
    ["Reports", "w-[73px]"],
    ["Drawings", "w-[76px]"],
];

function Header() {
    return (
        <header className="relative">
            <div className="flex h-6 items-center bg-white">
                <div className="ml-[46px] flex h-5 items-center rounded-r-full border border-[#c3c6ce] bg-[#f7f8fb] pr-1.5 pl-[2px]">
                    {quickTools.map((tool, i) =>
                        tool ? (
                            <IconButton key={i} tool={tool} className="h-5 w-[22px]" />
                        ) : (
                            <div key={i} className="mx-[1px] h-4 w-px bg-[#a8abb5]" />
                        )
                    )}
                    <Caret className="mx-1.5" color="#777" />
                </div>
                <svg viewBox="0 0 6 8" width="6" height="8" className="ml-2" aria-hidden="true">
                    <path d="M0 .5h6M0 4h6l-3 4z" stroke="#444" fill="#444" />
                </svg>
                <h1 className="flex-1 pl-[36px] text-center text-[11px] whitespace-pre text-black">ideCAD Structural - STATİK ŞABLON PROJE - [ZEMİN KAT CEILING,  3.00 ELEVATION]</h1>
                <button aria-label="Minimize" className="flex h-6 w-[46px] items-center justify-center">
                    <Glyph art={[["M4 8.5h9", K]]} />
                </button>
                <button aria-label="Restore" className="flex h-6 w-[46px] items-center justify-center">
                    <Glyph art={[["M3.5 5.5h7v7h-7zM5.5 5v-2.5h7v7h-2", K]]} />
                </button>
                <button aria-label="Close" className="mr-[2px] flex h-[22px] w-[45px] items-center justify-center self-start bg-[#e81123]">
                    <Glyph art={[["M4 4l8 8M12 4l-8 8", W]]} />
                </button>
            </div>

            <nav className="flex h-[22px] items-center bg-[#d0d3de] pl-[46px] text-[11px]">
                {tabs.map(([tab, w]) => (
                    <button
                        key={tab}
                        className={clsx(
                            "h-full shrink-0 pt-0.5 whitespace-nowrap",
                            w,
                            tab === "View" && "rounded-t-[3px] border border-b-0 border-[#b3c5cc] bg-linear-to-b from-[#dcebee] to-[#edf6f8]"
                        )}
                    >
                        {tab}
                    </button>
                ))}
                <div className="ml-auto flex h-full items-center">
                    <label className="flex h-5 w-[213px] items-center border border-[#b3b7c1] bg-white px-1">
                        <Glyph art={[["M7 2a4 4 0 1 0 .1 0M4.5 9.5l-3 4", G]]} />
                        <input aria-label="Search any command" placeholder="Search any command..." className="min-w-0 flex-1 text-[11px] italic outline-none placeholder:text-[#8b8e96]" />
                        <Caret />
                    </label>
                    <button aria-label="Layers" className="ml-1 flex w-6 justify-center">
                        <Glyph art={[...layers, ["M1 5h7M1 9h6M1 13h6", K, "", 1.5]]} />
                    </button>
                    <button aria-label="Layer list" className="flex w-6 justify-center">
                        <Glyph art={layers} />
                    </button>
                    <div className="ml-1 flex h-[21px] w-[134px] items-center border border-[#b3b7c1] bg-[#eceef3] pl-0.5">
                        <Glyph art={[["M2.5 2.5h8v10h-8zM3 3l7 9M10 3l-7 9", K, W, 1.6]]} className="-mr-0.5" />
                        <Glyph art={[["M2.5 6.5h7v6h-7zM9.5 6v-3q2-2 3 0v3", K, W, 1.2]]} />
                        <select aria-label="Style" className="flex-1 appearance-none pl-0.5 text-[11px] text-black">
                            <option>Standart</option>
                        </select>
                        <Caret className="mr-1" color="#777" />
                    </div>
                    <button className="ml-0.5 flex items-center gap-2.5">
                        Style
                        <Caret />
                    </button>
                    <button aria-label="Customize" className="ml-1 flex w-5 justify-center">
                        <Glyph art={[["M2 3h6l2 2v4M5 4v11", K, "", 2], ["M11 3v9M14 2v9M11 7h4", K, "", 1.5], ["M9 11h3v4h-3z", "", R]]} />
                    </button>
                    <div className="mx-1 h-4 w-px bg-[#a8abb5]" />
                    <button aria-label="Help" className="flex w-5 justify-center">
                        <Glyph art={[["M3 1h11v14h-11z", "#16336e", "#3064b8"], ["M3 1h2v14h-2z", "", "#16336e"], { t: "?", x: 6, y: 12, s: 11, c: W }]} />
                    </button>
                    <Caret className="mx-1" />
                    <button aria-label="Minimize drawing" className="w-[19px]">
                        <Glyph art={[["M4 11.5h7", "#666", "", 1.5]]} />
                    </button>
                    <button aria-label="Restore drawing" className="w-[19px]">
                        <Glyph art={[["M3.5 6.5h6v5h-6zM5.5 6v-2h6v5h-2", "#666"]]} />
                    </button>
                    <button aria-label="Close drawing" className="flex h-[21px] w-[19px] items-center justify-center border border-[#c9a24c] bg-[#fde9a5]">
                        <Glyph art={[["M4 4l8 8M12 4l-8 8", "#666", "", 2]]} />
                    </button>
                </div>
            </nav>

            <button aria-label="ideCAD menu" className="absolute top-[2px] left-1 flex h-[37px] w-[37px] items-center justify-center rounded-full border border-[#8d9099] bg-radial from-white to-[#c9ccd2] text-[9px] font-bold">
                <span className="font-normal">ide</span>
                <span className="text-[#d0202c]">CAD</span>
            </button>

            <div className="flex h-[90px] gap-[3px] rounded-b border-b border-[#b3b7c1] bg-linear-to-b from-[#e3f0f3] to-white pt-[2px] pb-0.5 pl-1">
                {groups.map((group) => (
                    <RibbonGroup key={group.name} name={group.name}>
                        {group.items.map((item) => (
                            <RibbonButton key={item.lines.join(" ")} item={item} />
                        ))}
                    </RibbonGroup>
                ))}
                <RibbonGroup name="Zoom">
                    <RibbonButton item={{ lines: ["Zoom"], w: "w-[42px]", art: [["M11 10a7 7 0 1 0 .1 0M16 22l6 7", "#4a4f57", "", 1.3], ["M24 5.5h6M27 2.5v6M24 14.5h6", K]] }} />
                    <RibbonButton item={{ lines: ["Zoom", "Selection"], w: "w-[52px]", art: [["M6.5 11.5h8v12h-8z", "#4a4f57", "", 1.3], ["M19 11a7 7 0 1 0 .1 0M17 13h5v8h-5zM24 23l7 7", "#4a4f57", "", 1.3]] }} />
                    <div className="flex w-[26px] flex-col items-center justify-between pt-1 pb-1">
                        <button aria-label="Zoom window"><Glyph art={lensBox} /></button>
                        <button aria-label="Zoom extents"><Glyph art={lensFit} /></button>
                        <button aria-label="Pan">
                            <Glyph art={[["M1 9l4 0v-4l2 4 2-4v4h3l-3 6h-4z", K, W], ["M12.5 1v6M9.5 4h6", K]]} />
                        </button>
                    </div>
                </RibbonGroup>
                <RibbonGroup name="Mode">
                    <button className="mt-px flex h-[67px] w-[73px] flex-col items-center rounded-sm border border-[#b38352] bg-linear-to-b from-[#f9c08c] via-[#fb9d41] to-[#fff0a0] pt-[2px]">
                        <Glyph size={32} art={[["M11 5v20M21 8v19", "#e01818", "", 1.3], ["M7 21h8l-4 8zM17 11h8l-4-7z", "", "#e01818"], ["M5 30.5h12M15 2.5h12", "#e01818", "", 1.5]]} />
                        <Label lines={["Structural", "Design Mode"]} />
                    </button>
                </RibbonGroup>
                <RibbonGroup name="View">
                    <div className="flex w-[35px] flex-col gap-px pt-px">
                        <button aria-label="Show nodes" className="flex h-[22px] w-[26px] items-center justify-center border border-[#c49352] bg-linear-to-b from-[#fbdcae] to-[#fdb64e]">
                            <Glyph art={[["M8 1v14M1 8h14", K], ["M8 4.5a3.5 3.5 0 1 0 .1 0", K, "#3f9ade"]]} />
                        </button>
                        <button aria-label="Show legend" className="flex h-[22px] w-[26px] items-center justify-center border border-[#c49352] bg-linear-to-b from-[#fbdcae] to-[#fdb64e]">
                            <Glyph art={legend} />
                        </button>
                    </div>
                </RibbonGroup>
            </div>

            <div className="flex h-7 items-center gap-px bg-[#d0d3de]">
                <HToolbar bar={drawTools} />
                <HToolbar bar={loadTools} />
            </div>
        </header>
    );
}

/* model space */

const PITCH = 71.2;
const steps = Array.from({ length: 11 }, (_, i) => i);
const gridX = Array.from({ length: 12 }, (_, i) => 149 + i * 142.7);
const gridY = [274, 417, 560, 702, 845];

function Web({ x1, y1, x2, y2 }: { x1: number; y1: number; x2: number; y2: number }) {
    return (
        <>
            <line x1={x1} y1={y1} x2={x2} y2={y2} stroke="#1c130b" strokeWidth="8" />
            <line x1={x1} y1={y1 + 1} x2={x2} y2={y2 + 1} stroke="#f8dcc0" strokeWidth="5" />
        </>
    );
}

function Column({ x, bar, tee }: { x: number; bar: number; tee: number }) {
    return (
        <g>
            <rect x={x - 3} y="681" width="36" height="22" fill="#8b8b8b" stroke="#6a6a6a" />
            <path d={`M${x + 8} 682v20M${x + 24} 682v20`} stroke="#777" />
            <rect x={x} y="488" width="30" height="193" fill="#0a7fc8" />
            <path d={`M${x + 1} 488v193M${x + 4} 488v193M${x + 25} 488v193M${x + 29} 488v193`} stroke="#0b2b4e" strokeWidth="1.5" />
            <path d={`M${tee} 490v19M${tee - 5} 509h10`} stroke="#0b2b4e" />
            <rect x={bar - 3} y="515" width="7" height="178" rx="3" fill="#2b8a13" stroke="#1c5a0e" />
            <circle cx={bar + 0.5} cy="519" r="3" stroke="#12330a" />
            <circle cx={bar + 0.5} cy="690" r="3" stroke="#12330a" />
            <path d={`M${bar} 516v10M${bar - 2} 596h5M${bar} 590v14`} stroke="#12330a" />
        </g>
    );
}

function Model() {
    return (
        <svg viewBox="51 165 1767 791" className="h-full w-full" fill="none" role="img" aria-label="Truss elevation">
            {gridX.slice(1).map((x) => (
                <path key={x} d={`M${x} 165v791`} stroke="#dfdfec" />
            ))}
            {gridY.map((y) => (
                <path key={y} d={`M51 ${y + 0.5}h1767`} stroke="#dadae8" />
            ))}
            <path d="M149 165v791M51 702.5h1767" stroke="#9a9a9a" />

            <path d="M163 702v-22h100v-10l29 21-29 21v-10z" fill="#82bb8f" />
            <path d="M150 702v-114h-9l20-27 20 27h-9v114z" fill="#82bb8f" />
            <text x="270" y="699" fontSize="24" fontWeight="700" fill="#fff" textAnchor="middle" fontFamily="Open Sans, sans-serif">x</text>

            <Column x={134} bar={153} tee={149} />
            <Column x={1705} bar={1724} tee={1719} />
            <path d="M141 588l9-12v12zM157 576v12h-6z" fill="#2a6f8f" opacity=".5" />
            <path d="M158 588h5v114h-5z" fill="#1b6f66" opacity=".8" />
            <path d="M155 681h13v21h-13z" fill="#4f8f5b" opacity=".6" />

            <path d="M149 489L934.5 417.5L1719 489v5L934.5 424L149 495z" fill="#f8dcc0" />
            <path d="M149 495L934.5 423.5L1719 494M934.5 418v6" stroke="#1c130b" />
            <path d="M149 489L934.5 418L1719 489" stroke="#1c130b" strokeWidth="2.5" />
            <path d="M157 556L934.5 484L1719 555v5L934.5 490L157 562z" fill="#f8dcc0" />
            <path d="M157 555.5L934.5 484L1719 555M934.5 484v6" stroke="#1c130b" />
            <path d="M147 562L934.5 490L1719 560" stroke="#1c130b" strokeWidth="2.5" />
            <path d="M163 488v74M1706 488v74" stroke="#0b2b4e" strokeWidth="1.5" />

            <rect x="932.5" y="426.5" width="6" height="55" fill="#f8dcc0" stroke="#1c130b" />
            {steps.slice(0, 10).map((i) => (
                <g key={i} stroke="#1c130b" fill="#f8dcc0">
                    <rect x={862.5 - i * PITCH} y={432.5 + i * 6.4} width="5" height="55" />
                    <rect x={1001.5 + i * PITCH} y={432.5 + i * 6.4} width="5" height="55" />
                    <path d={`M${862.5 - i * PITCH} ${432 + i * 6.4}v56M${1001.5 + i * PITCH} ${432 + i * 6.4}v56`} strokeWidth="2" />
                </g>
            ))}
            {steps.map((i) => (
                <g key={i}>
                    <Web x1={925 - i * PITCH} y1={429 + i * 6.5} x2={875 - i * PITCH} y2={485 + i * 6.5} />
                    <Web x1={943 + i * PITCH} y1={429 + i * 6.5} x2={994 + i * PITCH} y2={485 + i * 6.5} />
                </g>
            ))}

            {[75, 1793].map((x) => (
                <g key={x}>
                    <circle cx={x} cy="702.5" r="12" stroke="#e2745a" />
                    <text x={x} y="711" fontSize="24" fill="#111" textAnchor="middle" fontFamily="Liberation Sans, sans-serif">2</text>
                </g>
            ))}
        </svg>
    );
}

function SideTab({ text, h }: { text: string; h: string }) {
    return (
        <button className={clsx("mt-[3px] flex w-[22px] items-start justify-center self-start border border-[#c9b06a] bg-linear-to-r from-[#fbeeb8] to-[#fdd978] pt-0.5 text-xs text-[#5b5f66]", h)}>
            <span className="[writing-mode:vertical-rl]">{text}</span>
        </button>
    );
}

const log = ["*Cancel*", "Command :", "Select entity.", "Command :"];

const viewFlags = [
    ["Filter", "M2 3h14l-5 6v6h-4v-6z"],
    ["Numbers", "M4.5 14v-11l9 11v-11"],
    ["Views", "M3.5 3l5.5 11 5.5-11"],
];

function Workspace() {
    return (
        <main className="flex min-w-0 flex-1 flex-col">
            <div className="relative min-h-0 flex-1 border border-[#a9adba] bg-[#fefefe]">
                <Model />
                <p className="absolute top-0 left-1 text-xs leading-[22px] text-[#c4161c]">Work Plane 5 - (Vertical)</p>
                <div className="absolute top-0 right-0 flex">
                    {viewFlags.map(([name, d]) => (
                        <button key={name} aria-label={name} className="h-[17px] w-[18px] border border-[#333] bg-[#d4d4d4]">
                            <svg viewBox="0 0 18 17" className="h-full w-full" fill="none" stroke="#222" strokeWidth="1.3" aria-hidden="true">
                                <path d={d} />
                            </svg>
                        </button>
                    ))}
                </div>
            </div>
            <div className="mt-1 h-[60px] border-b border-[#a9adba] bg-[#efefef] text-[11px] leading-[13px] text-black">
                {log.map((line, i) => (
                    <p key={i}>{line}</p>
                ))}
            </div>
            <div className="flex h-[19px] bg-linear-to-b from-[#dcdee4] via-[#adb1c0] to-[#c4c7cb] text-[11px] leading-[21px] text-[#22242a]">
                <div className="w-[257px] border-r border-[#85888f] pl-[5px]">Sheeting</div>
                <div className="flex-1" />
                <div className="w-[76px] border-l border-[#85888f] pl-1">tf / m</div>
                <div className="w-[76px] border-l border-[#85888f] pl-2">1 : 50</div>
                <div className="w-[76px] border-x border-[#85888f] pl-1.5">% 24</div>
            </div>
        </main>
    );
}

const apps: { name: string; art: Art; open?: boolean; active?: boolean }[] = [
    { name: "File Explorer", open: true, art: [["M1 3h8l2 3h11v14h-21z", "", "#e0a526"], ["M1 7h21v13h-21z", "", "#fbd667"], ["M5 20v-7h13v7h-3v-4h-7v4z", "", "#4a9ac9"]] },
    { name: "Acrobat", art: [["M4 1h14q3 0 3 3v15q0 3-3 3h-14q-3 0-3-3v-15q0-3 3-3z", "", "#b30b00"], ["M5 16c-1-2 4-3 10-3 3 0 3 2 1 2-3 0-6-5-6-9 0-2 2-2 2 0 0 4-4 10-7 10z", W, "", 1.4]] },
    { name: "Archiver", art: [["M2 2h13v15h-13z", "#a37f2c", "#efc85e"], ["M4 6h9M4 11h9", "#a37f2c"], ["M6 4h5v3h-5zM6 9h5v3h-5z", "", "#fff1c0"], ["M15 2h3v16h-3z", "", "#8d8f94"], ["M16 1h4M16 4h4M16 7h4M16 10h4M13 20h9M16 14v7", "#8f9196", "", 2]] },
    { name: "Chrome", open: true, art: [["M11 11L1.5 5.5A11 11 0 0 1 20.5 5.5z", "", "#e33b2e"], ["M11 11L1.5 5.5A11 11 0 0 0 11 22z", "", "#3aa757"], ["M11 11h-1l-1 11A11 11 0 0 0 20.5 5.5h-10z", "", "#fbc116"], ["M1.5 5.5L6 13M21 6H11", "#e33b2e"], ["M11 6a5 5 0 1 0 .1 0", W, "#4285f4", 1.5]] },
    { name: "Paint", open: true, art: [["M2 10q3-8 12-6 6 2 4 7-2 3-5 2-3 0-2 4-4 5-8 0-2-3-1-7z", "#7f9fb0", "#dcecf4"], ["M5 8h3v3h-3z", "", "#4ea84a"], ["M9 5h3v3h-3z", "", "#e7a92c"], ["M4 12h3v3h-3z", "", "#d43c30"], ["M8 15h3v3h-3z", "", "#2f6fc4"], ["M19 3l-7 17", "#c88a45", "", 2], ["M17 0h5v5h-5z", "", "#d9a35c"]] },
    { name: "Notepad", open: true, art: [["M7 2h12l-3 17h-15z", "#8fc0cf", "#5fa9bd"], ["M4 17l5-14h8l-9 14z", "", "#a6dbe6"], ["M19 3l2 16h-5z", "#d8b88a", "#efe2c8"]] },
    { name: "Skype", open: true, art: [["M8 1q14-2 13 12 1 9-8 8-13 2-12-10-1-8 7-10z", "", "#0a9bea"], { t: "S", x: 6, y: 17, s: 15, c: W }] },
    { name: "Docs", open: true, art: [["M0 0h22v14l-8 8h-14v-3h4z", "", "#f7f7f7"], ["M3 10h16M3 14h13", "#aaa"], ["M14 22l1-7 7-1", "#333", "#ddd"], { t: "DOC1", x: 3, y: 6, s: 6, c: "#c01020" }] },
    { name: "ideCAD", open: true, active: true, art: [["M1 4a3 3 0 1 0 6 0a3 3 0 1 0-6 0", "", "#e0202e"], ["M1 9h5v12h-5zM8 1h5v20h-5zM15 1h6v5h-6zM15 8h6v5h-6zM15 15h6v6h-6z", "", "#f4f4f4"]] },
];

function Taskbar() {
    return (
        <footer className="flex h-10 shrink-0 items-stretch bg-[#1d1d1d] text-[13px] text-white">
            <button aria-label="Start" className="flex w-12 items-center justify-center">
                <Glyph art={[["M0 2l7-1v6.5h-7zM8 1l8-1v7.5h-8zM0 8.5h7v6.5l-7-1zM8 8.5h8v7.5l-8-1z", "", W]]} />
            </button>
            <button aria-label="Search" className="flex w-12 items-center justify-center">
                <Glyph art={[["M10 1a5 5 0 1 0 .1 0M6.5 9.5l-6 6", W, "", 1.5]]} />
            </button>
            <div className="flex pl-0.5">
                {apps.map((app) => (
                    <button key={app.name} aria-label={app.name} className={clsx("flex w-[49px] flex-col items-center", app.active && "bg-[#4a4a4a]")}>
                        <span className="flex flex-1 items-center">
                            <Glyph art={app.art} size={22} />
                        </span>
                        <span className={clsx("h-[3px]", app.open && "bg-[#76b9ed]", app.active ? "w-full" : "w-10")} />
                    </button>
                ))}
            </div>
            <div className="ml-auto flex items-center">
                <button className="flex items-center gap-2">
                    <Glyph size={22} art={[["M8 2a6 6 0 1 0 .1 0", "", "#f7b92f"], ["M5 19q-4-1-3-5 1-3 4-3 2-5 7-3 3 1 3 4 5 0 5 4-1 3-4 3z", "", "#c4e2f6"]]} />
                    <span className="pt-0.5 pl-0.5 whitespace-pre">0°C  Çok bulutlu</span>
                </button>
                <div className="ml-4 flex items-center gap-2">
                    <button aria-label="Hidden icons"><Glyph art={[["M3 11l5-5 5 5", W, "", 1.3]]} /></button>
                    <Glyph art={[["M3.5 5.5h6v6h-6zM9.5 8l3-2v5l-3-2M4 2q4-2 8 0M4 14q4 2 8 0", W, "", 1.3]]} />
                    <Glyph art={[["M3 12q-3-1-2-4 2-2 4-1 2-4 6-2 2 1 2 3 3 1 2 4z", "", "#e6e6e6"], ["M1 8q2-2 4-1 2-3 5-2l-5 5z", "", "#9a9a9a"]]} />
                    <Glyph art={[["M5.5 5.5h9v6h-9z", W, "", 1.3], ["M7 7h6v3h-6z", "", W], ["M2 3v2M4 3v2M1 6h4M3 6v3h2", W]]} />
                    <Glyph art={[["M2 14q1-10 12-11M5 14q1-7 9-8M8 14q1-4 6-5M11 14q1-2 3-2", "#d0d0d0"]]} />
                </div>
                <span className="ml-2.5 text-[11px]">TUR</span>
                <time className="ml-2.5 w-[60px] text-center text-[11px] leading-[18px]">
                    11:13
                    <br />
                    27.01.2022
                </time>
                <button aria-label="Notifications" className="ml-4">
                    <Glyph art={[["M0 0h16v12h-5l-3 4v-4h-8z", "", W], ["M3 3.5h10M3 6h10M3 8.5h7", "#1d1d1d"]]} />
                </button>
                <div className="ml-5 h-10 border-l border-[#555] pl-1" />
            </div>
        </footer>
    );
}

export default function App() {
    return (
        <div className="flex h-screen flex-col overflow-hidden bg-[#d0d3de] font-['Open_Sans','Noto_Sans',sans-serif] text-[#4b4f58]">
            <Header />
            <div className="flex min-h-0 flex-1">
                <div className="w-[25px] pt-px pl-px">
                    <VToolbar bar={leftTools} />
                </div>
                <div className="w-[25px] pl-px">
                    <SideTab text="Structure Tree" h="h-[106px]" />
                </div>
                <Workspace />
                <div className="w-6 pl-0.5">
                    <SideTab text="Report Preview" h="h-[112px]" />
                </div>
                <div className="flex gap-0.5 pt-px pr-px">
                    <div>
                        <VToolbar bar={editTools} />
                    </div>
                    <div className="flex flex-col gap-0.5">
                        <VToolbar bar={modelTools} />
                        <VToolbar bar={steelTools} />
                    </div>
                    <div className="flex flex-col gap-0.5">
                        <VToolbar bar={reportTools} />
                        <VToolbar bar={quantityTools} />
                    </div>
                </div>
            </div>
            <Taskbar />
        </div>
    );
}
